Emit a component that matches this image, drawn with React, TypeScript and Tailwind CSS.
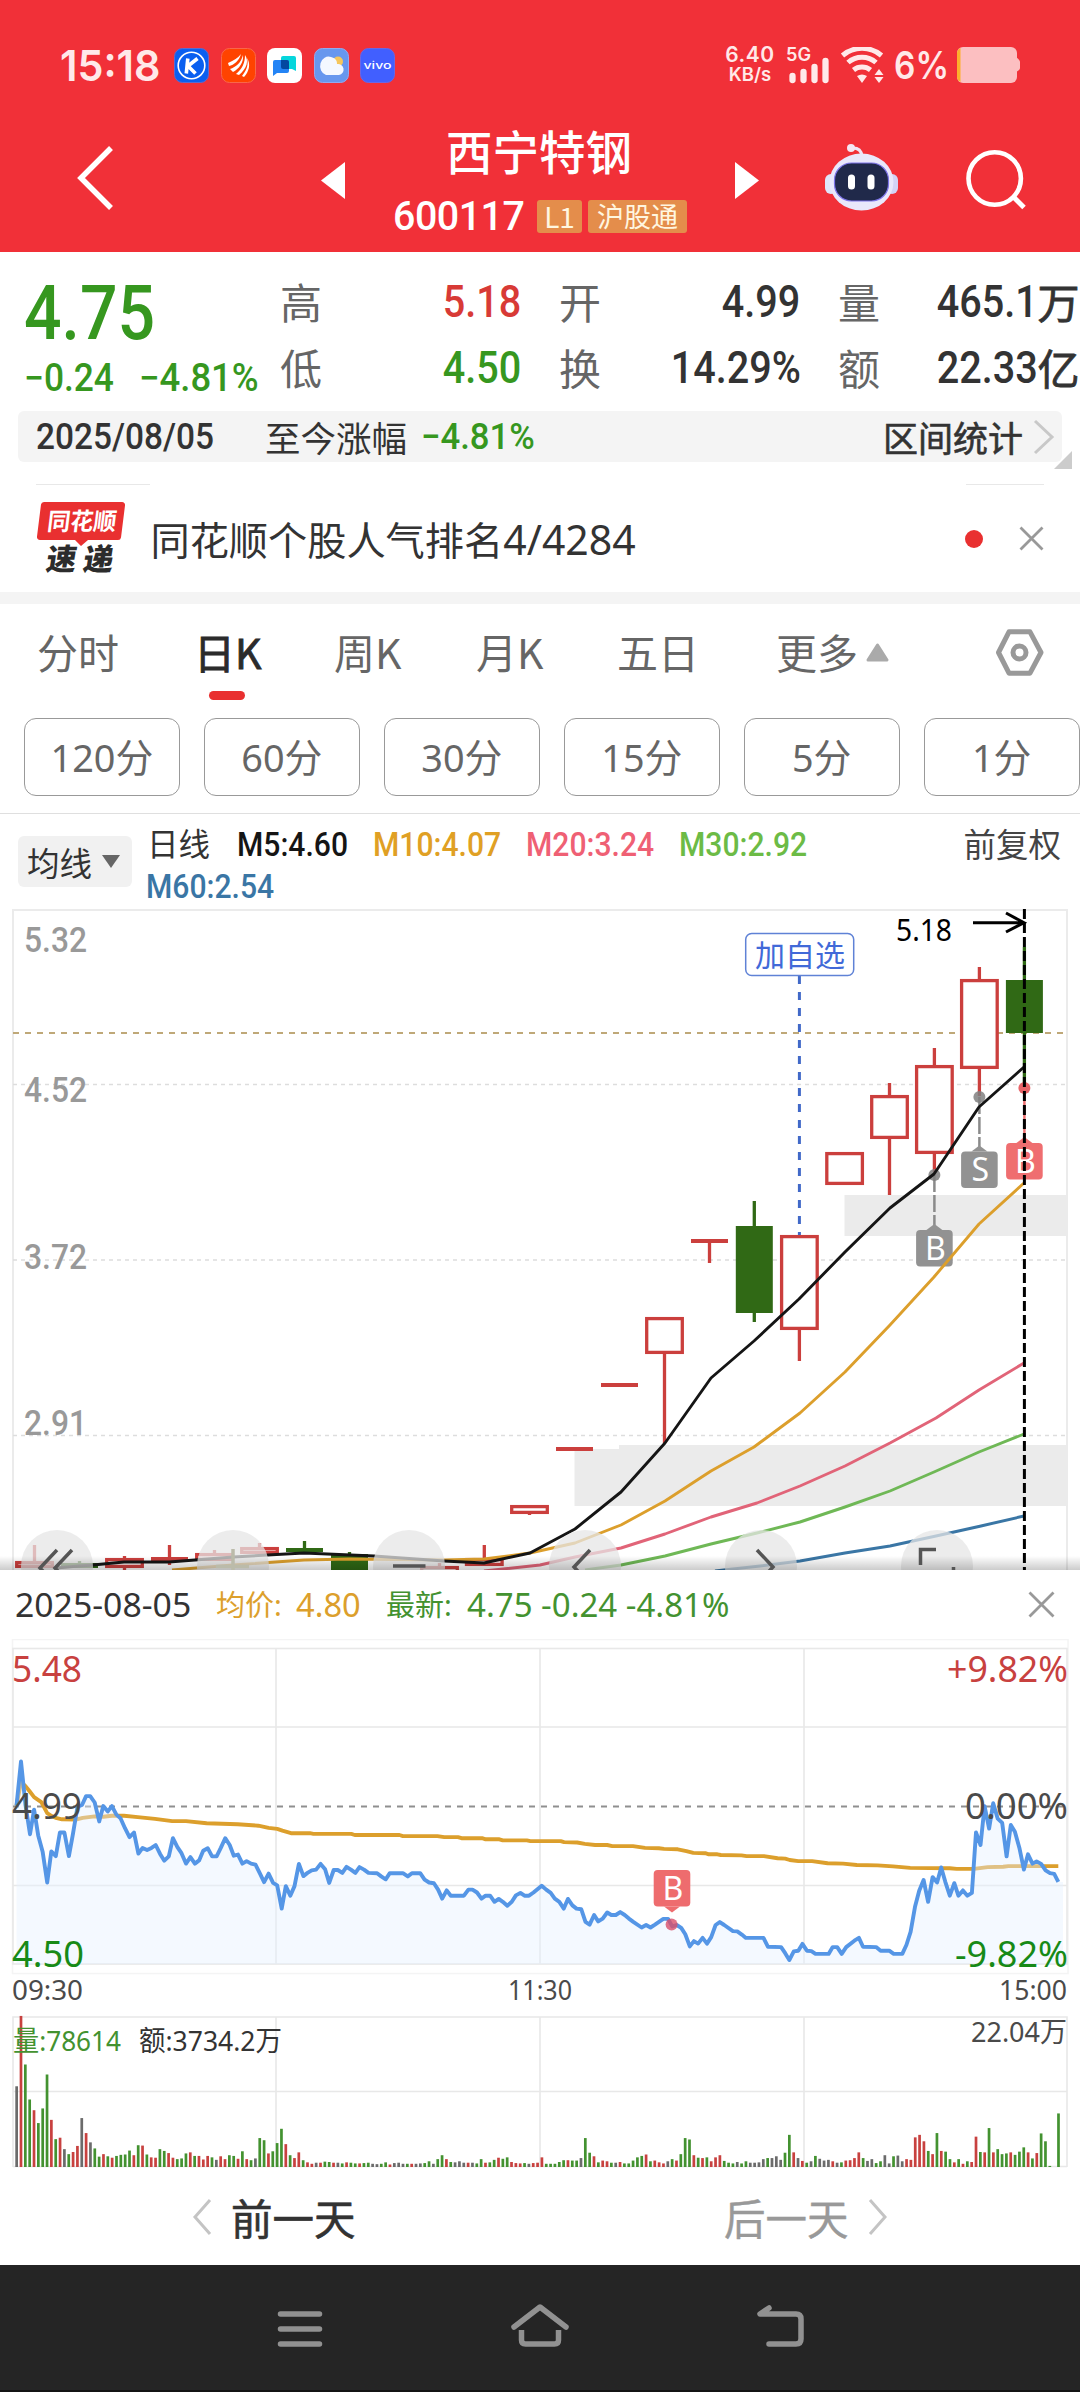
import React from 'react';
import clsx from 'clsx';

const RED = '#cb3f3d';
const GREEN = '#306915';

type Pair = [number, number];

const toPairs = (s: string): Pair[] => s.trim().split(/\s+/).map((p) => p.split(',').map(Number) as Pair);

/* ---------- data ---------- */

const quotes = [
  [
    { label: '高', value: '5.18', color: 'text-[#d83a36]' },
    { label: '低', value: '4.50', color: 'text-[#36971f]' },
  ],
  [
    { label: '开', value: '4.99', color: 'text-[#333333]' },
    { label: '换', value: '14.29%', color: 'text-[#333333]' },
  ],
  [
    { label: '量', value: '465.1', unit: '万', color: 'text-[#333333]' },
    { label: '额', value: '22.33', unit: '亿', color: 'text-[#333333]' },
  ],
];

const periods = ['120分', '60分', '30分', '15分', '5分', '1分'];

interface Candle {
  x: number;
  top: number;
  bottom: number;
  high?: number;
  low?: number;
  down?: boolean;
}

const candles: Candle[] = [
  { x: 34.5, top: 1561, bottom: 1568, high: 1545 },
  { x: 79.5, top: 1563, bottom: 1568, high: 1561, down: true },
  { x: 124.5, top: 1558, bottom: 1568, high: 1556, low: 1571 },
  { x: 169.5, top: 1557, bottom: 1561, high: 1545, low: 1565 },
  { x: 214.5, top: 1553, bottom: 1561, high: 1550 },
  { x: 259.5, top: 1547, bottom: 1554, high: 1543 },
  { x: 304.5, top: 1548, bottom: 1552, high: 1541, down: true },
  { x: 349.5, top: 1554, bottom: 1575, high: 1552, down: true },
  { x: 439.5, top: 1566, bottom: 1575, high: 1563 },
  { x: 484.3, top: 1558, bottom: 1566, high: 1545 },
  { x: 529.5, top: 1505, bottom: 1514, low: 1515 },
  { x: 574.5, top: 1447, bottom: 1451 },
  { x: 619.5, top: 1383, bottom: 1387 },
  { x: 664.5, top: 1317, bottom: 1354, low: 1443 },
  { x: 709.5, top: 1239, bottom: 1243, low: 1263 },
  { x: 754.3, top: 1226, bottom: 1313, high: 1201, low: 1322, down: true },
  { x: 799.4, top: 1235, bottom: 1330, low: 1361 },
  { x: 844.6, top: 1152, bottom: 1185 },
  { x: 889.5, top: 1095, bottom: 1139, high: 1083, low: 1195 },
  { x: 934.4, top: 1065, bottom: 1154, high: 1048, low: 1172 },
  { x: 979.4, top: 979, bottom: 1069, high: 967, low: 1096 },
  { x: 1024.4, top: 980, bottom: 1033, high: 947, low: 1088, down: true },
];

const averages = [
  {
    color: '#3a76a5',
    points: '715,1571 760,1566 800,1561 845,1553 890,1546 936,1536 981,1526 1024,1516',
  },
  {
    color: '#6fb856',
    points: '585,1570 621,1565 665,1556 711,1544 757,1533 800,1522 845,1507 890,1491 934,1472 979,1452 1024,1434',
  },
  {
    color: '#e16478',
    points: '484,1571 540,1565 575,1557 621,1548 665,1534 711,1517 757,1503 800,1486 845,1466 890,1443 936,1418 979,1390 1024,1363',
  },
  {
    color: '#dc9f2c',
    points:
      '172,1570 233,1565 304,1560 349,1559 444,1560 484,1559 530,1553 575,1543 621,1525 665,1501 711,1471 754,1447 800,1413 845,1372 890,1325 934,1277 979,1224 1024,1183',
  },
  {
    color: '#151515',
    points:
      '56,1568 79,1566 93,1565 124,1562 169,1562 195,1560 233,1557 304,1553 374,1556 444,1561 484,1563 530,1553 575,1529 621,1492 665,1443 711,1378 754,1341 799,1299 845,1252 890,1208 934,1174 979,1107 1024,1067',
  },
];

// intraday series, plotted on a 3136 x 883 field
const priceA =
  '48,492 61,368 74,490 87,572 99,503 111,575 124,622 137,707 149,620 162,633 174,567 187,567 200,633 212,570 225,495 238,490 250,465 262,465 275,483 288,536 300,493 313,508 325,493 338,517 350,527 363,555 376,580 389,567 402,626 414,610 427,616 440,610 452,602 465,627 477,646 490,634 502,583 515,608 527,625 540,654 553,636 566,654 578,645 590,618 603,611 616,634 629,634 641,610 654,583 667,602 679,632 691,629 704,654 716,647 729,654 742,657 755,682 767,706 780,682 793,708 805,715 818,780 830,717 843,744 855,717 868,655 881,689 893,680 905,673 918,671 931,655 944,670 956,708 969,672 981,672 994,680 1006,663 1019,671 1032,680 1044,664 1057,671 1070,680 1095,681 1107,690 1120,698 1132,681 1170,681 1184,690 1196,681 1220,681 1233,699 1246,707 1260,709 1272,727 1284,752 1297,729 1309,744 1347,744 1360,727 1372,727 1385,735 1398,752 1410,744 1423,744 1436,761 1448,753 1460,761 1473,772 1486,761 1498,743 1511,736 1523,744 1536,744 1549,735';
const priceB =
  '5,716 18,727 31,736 43,752 56,761 69,780 81,753 94,771 106,780 120,782 132,817 144,825 157,798 169,816 182,808 195,791 207,798 220,798 233,790 246,798 258,808 271,817 295,833 308,826 321,833 334,825 358,809 372,809 384,830 397,826 410,834 422,852 435,886 447,871 459,878 472,862 485,878 497,860 510,826 522,818 535,826 560,843 573,844 586,853 598,862 649,862 662,887 700,888 712,905 724,924 737,900 750,898 762,879 775,898 788,899 800,907 838,907 850,888 863,888 876,907 889,888 913,870 926,862 938,887 976,888 989,898 1014,898 1027,907 1052,907 1064,882 1076,845 1089,775 1101,730 1114,700 1127,761 1140,692 1153,707 1165,665 1177,705 1190,744 1203,709 1215,744 1228,729 1241,744 1254,736 1266,567 1279,602 1291,493 1304,556 1316,485 1329,528 1342,540 1355,634 1367,546 1379,565 1392,610 1405,671 1417,628 1430,654 1442,648 1455,655 1468,673 1481,681 1493,683 1505,705';
const avgA =
  '48,492 61,425 74,437 87,453 99,468 120,482 137,513 150,521 165,527 180,530 220,531 240,526 275,522 300,523 325,520 360,520 400,524 450,529 500,535 540,535 600,541 690,544 750,548 780,554 805,557 820,562 845,569 900,569 910,571 1020,571 1030,574 1160,574 1170,577 1270,577 1290,580 1330,580 1340,583 1400,583 1410,586 1450,586 1460,589 1530,589 1540,591';
const avgB =
  '60,591 70,594 108,595 130,599 160,602 195,602 210,605 270,605 305,610 345,611 360,613 400,614 425,619 445,624 480,625 490,628 515,628 525,630 585,631 600,633 650,633 690,639 712,640 725,644 750,647 790,647 835,653 880,654 920,658 980,659 1025,662 1075,666 1190,667 1210,669 1260,669 1300,664 1345,663 1360,661 1505,661';

const field = (a: string, b: string) =>
  [...toPairs(a), ...toPairs(b).map(([x, y]) => [x + 1568, y] as Pair)]
    .map(([x, y]) => `${(x / 2.9037).toFixed(1)},${(1630 + y / 2.8).toFixed(1)}`)
    .join(' ');

const priceLine = field(priceA, priceB);
const avgLine = field(avgA, avgB);

// r = up, g = down, k = flat
const volumes =
  'k226 r423 g287 g189 r159 g123 g164 g259 r132 g78 r82 k50 g36 r42 r59 k137 r95 k69 g52 g29 r36 g30 r26 g31 g34 g35 g46 r33 g61 r60 g35 r27 r26 g50 g45 r39 r26 g22 g24 g38 r41 g31 r31 r21 r31 g27 k20 r30 r22 g33 g31 r23 g44 r22 g19 k24 g81 g75 r38 g44 g67 g107 r64 g33 r25 r41 g19 r13 r9 k12 r12 g15 g14 r12 k12 g10 r13 g12 g10 r10 g11 g12 k9 k8 g9 g13 r7 k11 k12 k9 g9 r9 k9 k10 g11 g16 k9 g22 g33 r22 g14 k13 k16 k12 r12 k12 g10 g22 r12 g13 g20 r26 g23 g27 r14 r11 r10 g11 k9 r11 r12 ' +
  'r27 g9 g9 g9 g14 g19 r19 g18 g18 k25 g81 g40 r30 g13 r18 r16 g12 k12 r14 g10 g10 g18 g27 g31 r35 g16 r18 r13 r10 k16 g22 r18 g36 g81 g77 r33 g26 r25 g27 r16 r27 r33 g17 g12 g10 k14 g10 g16 k12 k12 k13 k22 g25 k25 k30 k20 g40 g90 r41 k25 r17 g12 k16 g31 k23 k18 k20 r16 k12 g13 r18 r19 r25 r41 g25 k17 k22 g11 g16 k33 k10 g30 k32 k16 r22 r20 r83 r90 r72 g45 r36 g95 r45 g43 g22 r13 g22 r9 g16 r14 r85 g42 r41 g109 r41 g50 g36 g38 r41 g34 g43 g55 r41 g24 r39 g94 g72 g3 g0 g150';

const volumeFill: Record<string, string> = { r: '#c8413f', g: '#439230', k: '#6b6b6b' };

/* ---------- small pieces ---------- */

const Din: React.FC<{ className?: string; children: React.ReactNode }> = ({ className, children }) => (
  <span className={clsx('inline-block whitespace-nowrap font-[Roboto,sans-serif] font-medium', className)}>{children}</span>
);

interface LabelProps {
  x: number;
  y: number;
  w: number;
  size: number;
  fill: string;
  weight?: number;
  din?: boolean;
  children: string;
}

// Chart label stretched to an exact width
const Label: React.FC<LabelProps> = ({ x, y, w, size, fill, weight = 400, din, children }) => (
  <text
    x={x}
    y={y}
    fontSize={size}
    fill={fill}
    fontWeight={weight}
    textLength={w}
    lengthAdjust="spacingAndGlyphs"
    className={din ? 'font-[Roboto,sans-serif]' : "font-['Noto_Sans','Noto_Sans_CJK_SC',sans-serif]"}
  >
    {children}
  </text>
);

const Flag: React.FC<{ x: number; y: number; fill: string; text: string; tip: 'up' | 'down' }> = ({ x, y, fill, text, tip }) => (
  <g>
    <rect x={x - 18.3} y={y} width={36.6} height={36.5} rx={4} fill={fill} />
    <path d={tip === 'up' ? `M${x - 8} ${y} l8 -6 l8 6z` : `M${x - 8} ${y + 36.5} l8 6 l8 -6z`} fill={fill} />
    <text x={x + 1} y={y + 29.5} fontSize={32} fill="#fff" textAnchor="middle" className="font-['Noto_Sans',sans-serif]">
      {text}
    </text>
  </g>
);

const StatusBar: React.FC = () => (
  <div className="flex h-[130px] items-center pl-[60px] text-[#ffe9e9]">
    <span className="inline-block w-[114px] origin-left scale-x-[0.96] font-[Inter,sans-serif] text-[43px] leading-[42px] font-semibold">
      15:18
    </span>
    <div className="flex items-center gap-[11.5px]">
      <svg width="35" height="35" viewBox="0 0 35 35">
        <rect x=".5" y=".5" width="34" height="34" rx="8" fill="#0a5ff0" stroke="#5b6bd0" />
        <circle cx="17.5" cy="17.5" r="13.3" fill="none" stroke="#fff" strokeWidth="1.6" />
        <path d="M13.8 10.5 L12.3 25.5 M23.5 10.5 L14 18 L21.5 25.5" fill="none" stroke="#fff" strokeWidth="3.600" />
      </svg>
      <svg width="35" height="35" viewBox="0 0 35 35">
        <rect x=".5" y=".5" width="34" height="34" rx="8" fill="#ff4300" stroke="#f9674a" />
        <path d="M7 15 C13 12 17 10 20 6 C18 13 13 17 8 18z M9 21 C15 19 20 15 22 7 C23 14 18 21 12 24z M15 26 C21 21 24 15 24 7 C28 13 26 20 18 27z M21 28 C25 23 28 17 26 10 C30 16 28 24 23 29z" fill="#fff" />
      </svg>
      <svg width="35" height="35" viewBox="0 0 35 35">
        <rect width="35" height="35" rx="8" fill="#fff" />
        <path d="M16 8h11a2 2 0 0 1 2 2v13l-4-2h-9a2 2 0 0 1-2-2v-9a2 2 0 0 1 2-2z" fill="#06d6dc" />
        <path d="M8 12h12a2 2 0 0 1 2 2v9a2 2 0 0 1-2 2H10l-4 3V14a2 2 0 0 1 2-2z" fill="#2384f5" />
        <path d="M14 12h6a2 2 0 0 1 2 2v7h-6a2 2 0 0 1-2-2z" fill="#0348a0" />
      </svg>
      <svg width="35" height="35" viewBox="0 0 35 35">
        <rect x=".5" y=".5" width="34" height="34" rx="8" fill="#6797ee" stroke="#92aaf0" />
        <circle cx="24" cy="13.5" r="5" fill="#f5c65c" />
        <path d="M12 27a8 9 0 1 1 5-18c4 1 6 3 6 7a5.500 5.500 0 0 1 2 11z" fill="#f4f8ff" />
      </svg>
      <svg width="35" height="35" viewBox="0 0 35 35">
        <rect x=".5" y=".5" width="34" height="34" rx="8" fill="#415fff" stroke="#6b66e4" />
        <text x="3.500" y="21" fontSize="10.500" fontWeight="500" fill="#fff" textLength="28" lengthAdjust="spacingAndGlyphs" className="font-[Inter,sans-serif]">
          vivo
        </text>
      </svg>
    </div>
    <div className="ml-[328px] w-[54px] text-center font-[Inter,sans-serif] font-semibold">
      <div className="text-[21px] leading-[18px] tracking-[0.5px]">6.40</div>
      <div className="text-[18.500px] leading-[20px]">KB/s</div>
    </div>
    <svg className="ml-[10px] overflow-visible" width="44" height="36" viewBox="0 0 44 36">
      <text x="-1" y="14" fontSize="18" fontWeight="600" fill="#ffe9e9" textLength="25" lengthAdjust="spacingAndGlyphs" className="font-[Inter,sans-serif]">
        5G
      </text>
      <path d="M5.500 29v4M16.500 25v8M27.500 20v13M38.500 14v19" stroke="#ffe9e9" strokeWidth="6.300" strokeLinecap="round" />
    </svg>
    <svg className="ml-[9px]" width="45" height="36" viewBox="0 0 45 36">
      <path d="M2.500 8.500a30 30 0 0 1 39 0M8 15.500a21 21 0 0 1 28 0M13.500 23a14 14 0 0 1 17 0" fill="none" stroke="#ffe9e9" strokeWidth="5" />
      <path d="M17 29q5 -3 10 0l-5 7zM39 22l4.500 6h-9zM39 36l4.500 -6h-9z" fill="#ffe9e9" />
    </svg>
    <span className="ml-[9px] w-[62px] origin-left scale-x-[0.88] font-[Inter,sans-serif] text-[38px] leading-[38px] font-semibold">6%</span>
    <svg className="ml-px" width="64" height="36" viewBox="0 0 64 36">
      <rect width="60" height="36" rx="6" fill="#fcbfc1" />
      <path d="M3.500 1v34a6 6 0 0 1-3.500-5V6a6 6 0 0 1 3.500-5z" fill="#fcb02c" />
      <path d="M59 10q4 3 4 5v6q0 2-4 4z" fill="#fcbfc1" />
    </svg>
  </div>
);

const TitleBar: React.FC = () => (
  <div className="flex h-[122px] items-start text-white">
    <svg className="mt-[15px] ml-[75px]" width="40" height="66" viewBox="0 0 40 66">
      <path d="M36 3 L6 33 L36 63" fill="none" stroke="#fff" strokeWidth="5.500" />
    </svg>
    <svg className="mt-[32px] ml-[206px]" width="24" height="37" viewBox="0 0 24 37">
      <path d="M24 0v37L0 18.500z" fill="#fff" />
    </svg>
    <div className="ml-[48px] flex w-[294px] flex-col">
      <div className="h-[66px] pl-[53px] text-[46.500px] leading-[39px] font-medium whitespace-nowrap">西宁特钢</div>
      <div className="flex h-[40px] items-center">
        <Din className="w-[144px] origin-left scale-x-[0.96] text-[41px] leading-[40px] tracking-[-0.5px]">600117</Din>
        <span className="h-[33px] w-[45px] rounded-[3px] bg-[#e48d4b] text-center text-[28px] leading-[33px] text-[#fff6e0]">L1</span>
        <span className="ml-[6px] h-[33px] w-[99px] rounded-[3px] bg-[#e48d4b] text-center text-[27px] leading-[31px] whitespace-nowrap text-[#fff6e0]">
          沪股通
        </span>
      </div>
    </div>
    <svg className="mt-[32px] ml-[48px]" width="24" height="37" viewBox="0 0 24 37">
      <path d="M0 0v37L24 18.500z" fill="#fff" />
    </svg>
    <svg className="mt-[13px] ml-[66px]" width="73" height="68" viewBox="0 0 73 68">
      <path d="M26 5q10 -1 11 8" fill="none" stroke="#f0e4f5" strokeWidth="3" />
      <circle cx="26" cy="5" r="4" fill="#f5e6f3" />
      <rect x="0" y="31" width="12" height="20" rx="6" fill="#dfe6fa" />
      <rect x="61" y="31" width="12" height="20" rx="6" fill="#d3d3f6" />
      <ellipse cx="36.500" cy="39" rx="32" ry="28.500" fill="#e9e8fb" />
      <rect x="9.500" y="20" width="54" height="38" rx="17" fill="#20294a" stroke="#7c73e8" strokeWidth="1.200" />
      <rect x="23" y="31.500" width="7" height="15" rx="3.500" fill="#fff" />
      <rect x="42.500" y="31.500" width="7" height="15" rx="3.500" fill="#fff" />
    </svg>
    <svg className="mt-[20px] ml-[68px]" width="60" height="60" viewBox="0 0 60 60">
      <circle cx="28.700" cy="28.500" r="26.200" fill="none" stroke="#fff" strokeWidth="4.600" />
      <path d="M47.500 47 L58 57.500" stroke="#fff" strokeWidth="5" />
    </svg>
  </div>
);

const QuotePanel: React.FC = () => (
  <div className="flex h-[159px]">
    <div className="w-[280px] pl-[24px] text-[#36971f]">
      <div className="h-[92px] pt-[23px]">
        <Din className="origin-left scale-x-[0.87] text-[76px] leading-[76px]">4.75</Din>
      </div>
      <div className="flex pt-[14px]">
        <Din className="w-[115px] origin-left scale-x-[0.93] text-[38px] leading-[40px]">−0.24</Din>
        <Din className="origin-left scale-x-[0.96] text-[38px] leading-[40px]">−4.81%</Din>
      </div>
    </div>
    <div className="flex gap-[37.500px] pt-[17px]">
      {quotes.map((col) => (
        <div key={col[0].label} className="flex w-[241.500px] shrink-0 flex-col">
          {col.map((q) => (
            <div key={q.label} className="flex h-[66px] items-center justify-between leading-[60px]">
              <span className="pb-[3px] text-[42px] text-[#666666]">{q.label}</span>
              <span className={clsx('flex items-center', q.color)}>
                <Din className="origin-right scale-x-[0.88] text-[45px]">{q.value}</Din>
                {q.unit && <span className="pb-[3px] text-[42px] [-webkit-text-stroke:0.8px]">{q.unit}</span>}
              </span>
            </div>
          ))}
        </div>
      ))}
    </div>
  </div>
);

const RangeBar: React.FC = () => (
  <div className="relative mx-[18px] flex h-[51px] items-center rounded-md bg-[#f4f4f4] pl-[18px] text-[#333333]">
    <Din className="w-[229px] origin-left scale-x-[0.915] text-[36.500px] leading-[50px]">2025/08/05</Din>
    <span className="w-[156px] text-[35.500px] leading-[50px] whitespace-nowrap">至今涨幅</span>
    <Din className="w-[140px] origin-left scale-x-[0.95] text-[36.500px] leading-[50px] text-[#36971f]">−4.81%</Din>
    <span className="ml-auto pr-[2px] text-[35px] leading-[54px] whitespace-nowrap [-webkit-text-stroke:0.6px]">区间统计</span>
    <svg className="mr-[7px] ml-[8px]" width="22" height="36" viewBox="0 0 22 36">
      <path d="M2 2 L19 18 L2 34" fill="none" stroke="#c8c8c8" strokeWidth="3" />
    </svg>
    <svg className="absolute -right-[10px] -bottom-[7px]" width="18" height="18" viewBox="0 0 18 18">
      <path d="M18 0v18H0z" fill="#cccccc" />
    </svg>
  </div>
);

const NewsStrip: React.FC = () => (
  <div className="flex h-[130px] flex-col pt-[22px]">
    <div className="flex justify-between pr-[36px] pl-[36px]">
      <div className="h-px w-[114px] bg-[#e8e8e8]" />
      <div className="h-px w-[78px] bg-[#e8e8e8]" />
    </div>
    <div className="flex h-[107px] items-center pl-[36px]">
      <svg width="90" height="76" viewBox="0 0 90 76" className="overflow-visible font-['Noto_Sans_CJK_SC',sans-serif]">
        <path d="M8 1h78a3 3 0 0 1 3 3.500l-4 32a3 3 0 0 1-3 2.500h-30l-7 6-6-6H4a3 3 0 0 1-3-3.500L5 3.500A3 3 0 0 1 8 1z" fill="#e93030" />
        <text x="14" y="29" fontSize="24" fontWeight="700" fill="#fff" transform="skewX(-7)" textLength="69" lengthAdjust="spacingAndGlyphs">
          同花顺
        </text>
        <text x="20" y="69" fontSize="30" fontWeight="900" fill="#2c2c2c" transform="skewX(-9)" textLength="67">
          速递
        </text>
      </svg>
      <span className="ml-[24.500px] text-[39.200px] leading-[58px] whitespace-nowrap text-[#333333]">
        同花顺个股人气排名<span className="inline-block origin-left font-['Noto_Sans',sans-serif] text-[41px]">4/4284</span>
      </span>
      <span className="ml-auto h-[18px] w-[18px] rounded-full bg-[#e93030]" />
      <svg className="mr-[36px] ml-[36px]" width="25" height="25" viewBox="0 0 25 25">
        <path d="M1.500 1.500l22 22M23.500 1.500l-22 22" stroke="#999" strokeWidth="2.800" />
      </svg>
    </div>
  </div>
);

const Tabs: React.FC = () => (
  <div className="flex h-[114px] pl-[37px] text-[41px] leading-[94px] whitespace-nowrap text-[#666666]">
    <span className="w-[157px]">分时</span>
    <span className="relative w-[140px] text-[#2b2b2b] [-webkit-text-stroke:0.9px]">
      日K
      <span className="absolute top-[87px] left-[15px] h-[9px] w-[36px] rounded-full bg-[#e93030]" />
    </span>
    <span className="w-[142px]">周K</span>
    <span className="w-[141px]">月K</span>
    <span className="w-[159px]">五日</span>
    <span className="w-[90px]">更多</span>
    <svg className="mt-[39px]" width="23" height="19" viewBox="0 0 23 19">
      <path d="M11.500 2L21 17H2z" fill="#aaaaaa" stroke="#aaaaaa" strokeWidth="3" strokeLinejoin="round" />
    </svg>
    <svg className="mt-[25px] ml-[106px]" width="49" height="47" viewBox="0 0 49 47">
      <path d="M14 2.800h21L46 23.500 35 44.200H14L3.500 23.500z" fill="none" stroke="#999" strokeWidth="5" strokeLinejoin="round" />
      <circle cx="24.500" cy="23.500" r="6.500" fill="none" stroke="#999" strokeWidth="5" />
    </svg>
  </div>
);

const Legend: React.FC = () => (
  <div className="flex h-[95px] text-[#333333]">
    <div className="mt-[22px] ml-[18px] flex h-[51px] w-[114px] items-center rounded-md bg-[#f1f1f1] pl-[9px]">
      <span className="w-[75px] text-[32.500px] leading-[50px] whitespace-nowrap">均线</span>
      <svg width="18" height="13" viewBox="0 0 18 13">
        <path d="M0 0h18L9 13z" fill="#666" />
      </svg>
    </div>
    <div className="ml-[15px] w-[790px] pt-[9px] text-[31px] leading-[42px]">
      <div className="flex h-[41px]">
        <span className="w-[90px] text-[31.500px] leading-[39px]">日线</span>
        <Din className="w-[136px] origin-left scale-x-[0.885] text-[34px] text-[#151515]">M5:4.60</Din>
        <Din className="w-[153px] origin-left scale-x-[0.885] text-[34px] text-[#e0a024]">M10:4.07</Din>
        <Din className="w-[153px] origin-left scale-x-[0.885] text-[34px] text-[#ef6074]">M20:3.24</Din>
        <Din className="w-[153px] origin-left scale-x-[0.885] text-[34px] text-[#6cbb46]">M30:2.92</Din>
      </div>
      <Din className="-ml-px origin-left scale-x-[0.885] text-[34px] text-[#3a76a5]">M60:2.54</Din>
    </div>
    <span className="ml-auto pt-[8px] pr-[19px] text-[32.500px] leading-[41px] whitespace-nowrap text-[#444444]">前复权</span>
  </div>
);

const KLineChart: React.FC = () => (
  <svg className="block" width="1080" height="661" viewBox="0 909 1080 661">
    <defs>
      <linearGradient id="fade" x1="0" y1="0" x2="0" y2="1">
        <stop offset="0" stopColor="#000" stopOpacity="0" />
        <stop offset="1" stopColor="#000" stopOpacity="0.2" />
      </linearGradient>
    </defs>
    <path d="M13 1571V910H1067V1571" fill="none" stroke="#ebebeb" strokeWidth="2" />
    <rect x="844.500" y="1195" width="223.500" height="41" fill="#ebebeb" />
    <path d="M574.500 1449H619V1445H1068V1506H574.500z" fill="#ebebeb" />
    <g stroke="#dddddd" strokeWidth="1.300" strokeDasharray="4 4">
      <path d="M13 1084.500H1066" />
      <path d="M13 1260H1066" />
      <path d="M13 1435.500H1066" />
    </g>
    <path d="M13 1033H1063" stroke="#bfa878" strokeWidth="2" strokeDasharray="6 6" />

    <Label x={24} y={952} w={63} size={35} fill="#999" weight={500} din>5.32</Label>
    <Label x={24} y={1102} w={63} size={35} fill="#999" weight={500} din>4.52</Label>
    <Label x={24} y={1268.5} w={63} size={35} fill="#999" weight={500} din>3.72</Label>
    <Label x={24} y={1434.5} w={63} size={35} fill="#999" weight={500} din>2.91</Label>

    {candles.map((c) => {
      const color = c.down ? GREEN : RED;
      return (
        <g key={c.x} stroke={color} strokeWidth="3.300">
          {c.high && <path d={`M${c.x} ${c.high}V${c.top}`} />}
          {c.low && <path d={`M${c.x} ${c.bottom}V${c.low}`} />}
          {c.down || c.bottom - c.top < 5 ? (
            <rect x={c.x - 18.5} y={c.top} width={37} height={c.bottom - c.top} fill={color} stroke="none" />
          ) : (
            <rect x={c.x - 17.8} y={c.top + 1.6} width={35.6} height={c.bottom - c.top - 3.2} fill="#fff" />
          )}
        </g>
      );
    })}

    <path d="M799.400 976V1235" stroke="#4169c8" strokeWidth="3" strokeDasharray="8 8" />
    <rect x="745.700" y="933.500" width="108" height="42" rx="6" fill="#fff" stroke="#5f82d6" strokeWidth="1.500" />
    <Label x={755} y={966} w={90} size={30} fill="#4169d8">加自选</Label>

    <path d="M979.400 1097V1147M934.400 1175V1225" stroke="#8a8a8a" strokeWidth="2.500" strokeDasharray="17 3" />
    <circle cx="979.400" cy="1097" r="6" fill="#808080" fillOpacity="0.850" />
    <circle cx="934.400" cy="1175" r="6" fill="#808080" fillOpacity="0.850" />
    <path d="M1024.400 1088V1140" stroke="#ec6f6f" strokeWidth="2.500" />
    <circle cx="1024.400" cy="1088" r="6" fill="#e86468" />
    <Flag x={979.4} y={1151.5} fill="#929292" text="S" tip="up" />
    <Flag x={934.4} y={1230} fill="#929292" text="B" tip="up" />
    <Flag x={1024.4} y={1143} fill="#ef6e70" text="B" tip="up" />

    {averages.map((m) => (
      <polyline key={m.color} points={m.points} fill="none" stroke={m.color} strokeWidth="2.900" strokeLinejoin="round" />
    ))}

    <Label x={896} y={941} w={56} size={31} fill="#000">5.18</Label>
    <path d="M973 922.700H1023M1006 913L1024 922.700L1006 932" fill="none" stroke="#000" strokeWidth="3" />
    <path d="M1024.400 909V1571" stroke="#000" strokeWidth="3" strokeDasharray="10 4" />

    {[57, 233, 409, 585, 761, 937].map((cx) => (
      <circle key={cx} cx={cx} cy="1566" r="36" fill="#e6e6e6" fillOpacity="0.750" />
    ))}
    <rect x="0" y="1556" width="1080" height="14" fill="url(#fade)" />
    <g fill="none" stroke="#555" strokeWidth="3.500">
      <path d="M57 1550L40 1568L57 1586M72 1550L55 1568L72 1586" />
      <path d="M393 1566H425.500" />
      <path d="M590 1550L574 1567L590 1584M757 1550L773 1567L757 1584" />
      <path d="M920.500 1565V1549.500H936M953.500 1567V1582" />
    </g>
    <path d="M216 1566.500H249M233 1549V1583" stroke="#bbbbaa" strokeWidth="3.500" />
  </svg>
);

const IntradayHeader: React.FC = () => (
  <div className="flex h-[69px] items-center pl-[15px] font-['Noto_Sans','Noto_Sans_CJK_SC',sans-serif] text-[32px] leading-[69px] whitespace-nowrap">
    <span className="w-[201px] origin-left scale-x-[1.055] text-[#333333]">2025-08-05</span>
    <span className="w-[80px] text-[29px] text-[#dc9f2c]">均价:</span>
    <span className="w-[90px] origin-left scale-x-[1.02] text-[#dc9f2c]">4.80</span>
    <span className="w-[81px] text-[29px] text-[#439230]">最新:</span>
    <span className="origin-left scale-x-[1.032] text-[#439230]">4.75 -0.24 -4.81%</span>
    <svg className="mr-[25px] ml-auto" width="27" height="27" viewBox="0 0 27 27">
      <path d="M1.500 1.500l24 24M25.500 1.500l-24 24" stroke="#999" strokeWidth="2.800" />
    </svg>
  </div>
);

const IntradayChart: React.FC = () => (
  <svg className="block" width="1080" height="530" viewBox="0 1639 1080 530">
    <rect x="12.500" y="1639.500" width="1055.500" height="334" fill="none" stroke="#f4f4f4" strokeWidth="1.500" />
    <g fill="none" stroke="#e8e8e8" strokeWidth="1.600">
      <rect x="13" y="1648.500" width="1054" height="315.500" />
      <path d="M276 1649V1964M540 1649V1964M804 1649V1964M13 1727H1067M13 1885.500H1067" />
      <path d="M13 2167V2017H1067V2167M276 2017V2167M540 2017V2167M804 2017V2167M13 2091.500H1067M13 2166.500H1067" />
    </g>
    <path d="M13 1806.500H1066" stroke="#8f8f8f" strokeWidth="1.800" strokeDasharray="6 6" />

    <polyline points={avgLine} fill="none" stroke="#dc9f2c" strokeWidth="3.900" strokeLinejoin="round" />
    <polygon points={`${priceLine} 1063,1882 1063,1964 16.5,1964`} fill="#e4f0ff" fillOpacity="0.420" />
    <polyline points={priceLine} fill="none" stroke="#5596e6" strokeWidth="3.900" strokeLinejoin="round" />

    <circle cx="671.600" cy="1924.500" r="6" fill="#d9506a" fillOpacity="0.800" />
    <Flag x={672} y={1870} fill="#ee6c6e" text="B" tip="down" />

    <Label x={12} y={1682} w={70} size={37} fill="#c8413f">5.48</Label>
    <Label x={12} y={1818.5} w={70} size={37} fill="#4a4a4a">4.99</Label>
    <Label x={12} y={1967} w={72} size={37} fill="#178a17">4.50</Label>
    <Label x={947} y={1682} w={121} size={37} fill="#c8413f">+9.82%</Label>
    <Label x={965} y={1818.5} w={103} size={37} fill="#4a4a4a">0.00%</Label>
    <Label x={955} y={1967} w={113} size={37} fill="#178a17">-9.82%</Label>
    <Label x={12} y={1999.5} w={71} size={28} fill="#4a4a4a">09:30</Label>
    <Label x={508} y={1999.5} w={64} size={28} fill="#4a4a4a">11:30</Label>
    <Label x={999} y={1999.5} w={68} size={28} fill="#4a4a4a">15:00</Label>

    {volumes.split(' ').map((v, i) => {
      const h = Number(v.slice(1)) / 2.8;
      return <rect key={i} x={15.3 + i * 4.341} y={2167 - h} width={2.7} height={h} fill={volumeFill[v[0]]} />;
    })}
    <Label x={13} y={2051} w={108} size={28} fill="#439230">量:78614</Label>
    <Label x={139} y={2051} w={143} size={28} fill="#333">额:3734.2万</Label>
    <Label x={971} y={2042} w={96} size={28} fill="#4a4a4a">22.04万</Label>
  </svg>
);

const DaySwitch: React.FC = () => (
  <div className="flex h-[96px] items-center pl-[192px] text-[41.500px] leading-[94px] whitespace-nowrap">
    <svg width="22" height="38" viewBox="0 0 22 38">
      <path d="M18 2L3 19L18 36" fill="none" stroke="#c4c4c4" strokeWidth="3" />
    </svg>
    <span className="ml-[17px] w-[493px] text-[#333333] [-webkit-text-stroke:0.6px]">前一天</span>
    <span className="text-[#999999] [-webkit-text-stroke:0.4px]">后一天</span>
    <svg className="ml-[18px]" width="22" height="38" viewBox="0 0 22 38">
      <path d="M3 2L18 19L3 36" fill="none" stroke="#c4c4c4" strokeWidth="3" />
    </svg>
  </div>
);

const SystemNav: React.FC = () => (
  <div className="flex h-[127px] border-b-2 border-[#141414] bg-[#252525] pt-[36px]">
    <svg className="ml-[276px]" width="48" height="50" viewBox="0 0 48 50">
      <path d="M4.500 13h39M4.500 28h39M4.500 43h39" stroke="#919191" strokeWidth="5.500" strokeLinecap="round" />
    </svg>
    <svg className="ml-[184px]" width="64" height="50" viewBox="0 0 64 50">
      <path d="M6 26L32 6L58 26" fill="none" stroke="#919191" strokeWidth="5.500" strokeLinecap="round" strokeLinejoin="round" />
      <path d="M13.500 29V39Q13.500 43 17.500 43H46.500Q50.500 43 50.500 39V29" fill="none" stroke="#919191" strokeWidth="5.500" />
    </svg>
    <svg className="ml-[181px]" width="54" height="50" viewBox="0 0 54 50">
      <path d="M16 7L7 13H43Q48 13 48 18V38Q48 43 43 43H16" fill="none" stroke="#919191" strokeWidth="5.500" strokeLinecap="round" strokeLinejoin="round" />
    </svg>
  </div>
);

const App: React.FC = () => {
  return (
    <div className="h-[2392px] w-[1080px] overflow-hidden bg-white font-['Noto_Sans_CJK_SC',sans-serif]">
      <header className="bg-[#f13038]">
        <StatusBar />
        <TitleBar />
      </header>
      <QuotePanel />
      <RangeBar />
      <NewsStrip />
      <div className="h-[12px] bg-[#f4f4f4]" />
      <Tabs />
      <div className="flex h-[96px] gap-[24px] border-b border-[#dfdfdf] pl-[24px]">
        {periods.map((p) => (
          <button
            key={p}
            className="h-[78px] w-[156px] shrink-0 rounded-[12px] border-[1.500px] border-[#999999] text-[36.500px] leading-[70px] text-[#666666]"
          >
            <span className="inline-block scale-x-[0.97] font-['Noto_Sans','Noto_Sans_CJK_SC',sans-serif] text-[39px]">{p}</span>
          </button>
        ))}
      </div>
      <Legend />
      <KLineChart />
      <IntradayHeader />
      <IntradayChart />
      <DaySwitch />
      <SystemNav />
    </div>
  );
};

export default App;
